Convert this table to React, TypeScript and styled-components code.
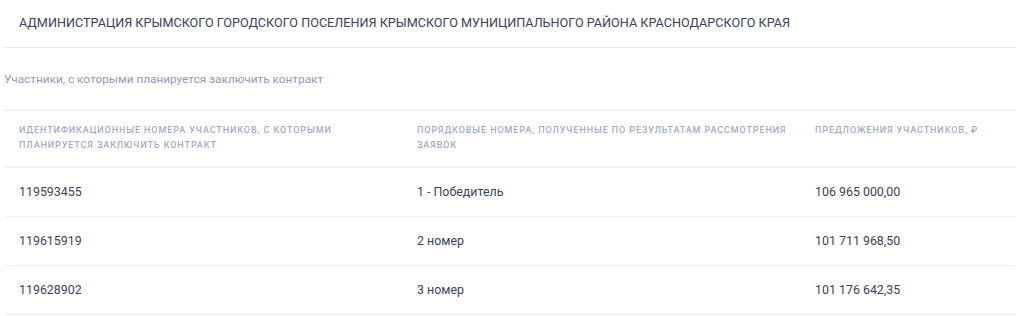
import styled, { createGlobalStyle } from "styled-components"

const GlobalStyle = createGlobalStyle`
  body {
    margin: 0;
    background: #ffffff;
    font-family: Roboto, "Liberation Sans", sans-serif;
  }
`

const colors = {
  text: "#3b4258",
  muted: "#8e9ab8",
  head: "#a3abc3",
  line: "#e8eaf6",
  rowLine: "#eef0f5",
}

const Page = styled.div`
  padding: 0 8px 0 4px;
`

const Title = styled.h1`
  margin: 0;
  padding: 13px 15px 14px;
  font-size: 12.65px;
  line-height: 20px;
  font-weight: 400;
  text-transform: uppercase;
  color: ${colors.text};
  border-bottom: 1px solid ${colors.line};
`

const Subtitle = styled.p`
  margin: 0;
  padding: 23px 0 22px;
  font-size: 11.8px;
  line-height: 16px;
  color: ${colors.muted};
`

const Table = styled.div`
  border-top: 2px solid #f1f2f6;
`

const Row = styled.div<{ $head?: boolean }>`
  display: grid;
  grid-template-columns: 398px 398px 1fr;
  border-bottom: ${p => (p.$head ? "2px solid #f1f2f6" : `1px solid ${colors.rowLine}`)};
`

const HeadCell = styled.div`
  padding: 12px 8px 13px 15px;
  font-size: 9px;
  line-height: 15px;
  font-weight: 500;
  letter-spacing: 0.9px;
  text-transform: uppercase;
  color: ${colors.head};
`

const Cell = styled.div`
  padding: 16px 15px 16px;
  font-size: 12.4px;
  line-height: 16px;
  color: ${colors.text};
`

const rows = [
  ["119593455", "1 - Победитель", "106 965 000,00"],
  ["119615919", "2 номер", "101 711 968,50"],
  ["119628902", "3 номер", "101 176 642,35"],
]

export default function App() {
  return (
    <>
      <GlobalStyle />
      <Page>
        <Title>Администрация Крымского городского поселения Крымского муниципального района Краснодарского края</Title>
        <Subtitle>Участники, с которыми планируется заключить контракт</Subtitle>
        <Table>
          <Row $head>
            <HeadCell>Идентификационные номера участников, с которыми планируется заключить контракт</HeadCell>
            <HeadCell>Порядковые номера, полученные по результатам рассмотрения заявок</HeadCell>
            <HeadCell>Предложения участников, ₽</HeadCell>
          </Row>
          {rows.map(r => (
            <Row key={r[0]}>
              {r.map((c, i) => (
                <Cell key={i}>{c}</Cell>
              ))}
            </Row>
          ))}
        </Table>
      </Page>
    </>
  )
}
